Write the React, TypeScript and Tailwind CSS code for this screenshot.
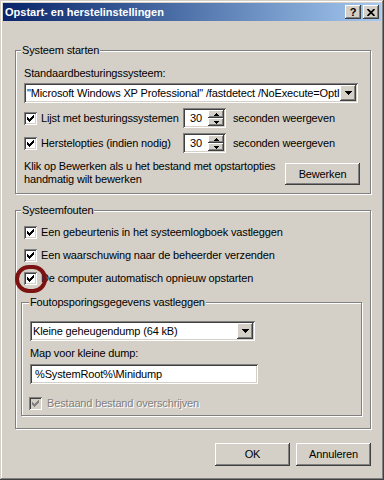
import { ReactNode } from "react";

const raised =
  "shadow-[inset_-1px_-1px_0_#404040,inset_1px_1px_0_#ffffff,inset_-2px_-2px_0_#808080,inset_2px_2px_0_#d4d0c8]";
const sunken =
  "shadow-[inset_1px_1px_0_#808080,inset_-1px_-1px_0_#ffffff,inset_2px_2px_0_#404040,inset_-2px_-2px_0_#d4d0c8]";

const Check = ({ disabled = false }: { disabled?: boolean }) => {
  const tops = [5, 6, 7, 6, 5, 4, 3];
  return (
    <div className={`relative w-[13px] h-[13px] shrink-0 ${sunken} ${disabled ? "bg-[#d4d0c8]" : "bg-white"}`}>
      <svg width="13" height="13" className="absolute left-0 top-0" shapeRendering="crispEdges">
        {tops.map((t, i) => (
          <rect key={i} x={3 + i} y={t} width="1" height="3" fill={disabled ? "#808080" : "#000000"} />
        ))}
      </svg>
    </div>
  );
};

const DownArrow = () => (
  <svg width="7" height="4" shapeRendering="crispEdges">
    <rect x="0" y="0" width="7" height="1" fill="#000" />
    <rect x="1" y="1" width="5" height="1" fill="#000" />
    <rect x="2" y="2" width="3" height="1" fill="#000" />
    <rect x="3" y="3" width="1" height="1" fill="#000" />
  </svg>
);

const Combo = ({ text, className }: { text: string; className: string }) => (
  <div className={`relative flex items-center bg-white ${sunken} ${className}`}>
    <span className="pl-[3px] pr-[20px] whitespace-nowrap overflow-hidden">{text}</span>
    <div className={`absolute right-[2px] top-[2px] w-[16px] h-[16px] bg-[#d4d0c8] flex items-center justify-center ${raised}`}>
      <DownArrow />
    </div>
  </div>
);

const Spinner = ({ value }: { value: string }) => (
  <div className={`relative w-[43px] h-[20px] bg-white flex items-center ${sunken}`}>
    <span className="pl-[7px]">{value}</span>
    <div className="absolute right-[2px] top-[2px] w-[16px] h-[16px] flex flex-col">
      <div className={`h-[8px] bg-[#d4d0c8] flex items-center justify-center ${raised}`}>
        <svg width="5" height="3" shapeRendering="crispEdges">
          <rect x="2" y="0" width="1" height="1" fill="#000" />
          <rect x="1" y="1" width="3" height="1" fill="#000" />
          <rect x="0" y="2" width="5" height="1" fill="#000" />
        </svg>
      </div>
      <div className={`h-[8px] bg-[#d4d0c8] flex items-center justify-center ${raised}`}>
        <svg width="5" height="3" shapeRendering="crispEdges">
          <rect x="0" y="0" width="5" height="1" fill="#000" />
          <rect x="1" y="1" width="3" height="1" fill="#000" />
          <rect x="2" y="2" width="1" height="1" fill="#000" />
        </svg>
      </div>
    </div>
  </div>
);

const Group = ({ title, left, className, children }: { title: string; left: string; className: string; children: ReactNode }) => (
  <div className={`relative border border-[#808080] shadow-[inset_1px_1px_0_#ffffff,1px_1px_0_#ffffff] ${className}`}>
    <span className={`absolute top-[-7px] px-[1px] bg-[#d4d0c8] leading-[13px] ${left}`}>{title}</span>
    {children}
  </div>
);

const Button = ({ label, className }: { label: string; className: string }) => (
  <div className={`flex items-center justify-center bg-[#d4d0c8] ${raised} ${className}`}>{label}</div>
);

export default function App() {
  return (
    <div className="relative w-[384px] h-[480px] bg-[#d4d0c8] p-[3px] font-['Liberation_Sans',Arial,sans-serif] text-[11px] leading-[13px] tracking-[-0.15px] text-black shadow-[inset_-1px_-1px_0_#404040,inset_1px_1px_0_#d4d0c8,inset_-2px_-2px_0_#808080,inset_2px_2px_0_#ffffff]">
      {/* title bar */}
      <div className="h-[18px] flex items-center justify-between pl-[2px] pr-[2px] bg-gradient-to-r from-[#0a246a] to-[#a6caf0]">
        <span className="text-white font-bold tracking-normal">Opstart- en herstelinstellingen</span>
        <div className="flex gap-[2px]">
          <div className={`w-[16px] h-[14px] bg-[#d4d0c8] flex items-center justify-center font-bold text-[11px] ${raised}`}>?</div>
          <div className={`w-[16px] h-[14px] bg-[#d4d0c8] flex items-center justify-center ${raised}`}>
            <svg width="8" height="7" viewBox="0 0 8 7">
              <path d="M0.5 0 L7.5 7 M7.5 0 L0.5 7" stroke="#000" strokeWidth="1.7" />
            </svg>
          </div>
        </div>
      </div>

      {/* Systeem starten */}
      <Group title="Systeem starten" left="left-[5px]" className="mt-[29px] ml-[12px] w-[356px] pl-[8px] pb-[7px]">
        <div className="mt-[16px] h-[13px]">Standaardbesturingssysteem:</div>
        <Combo
          text={'"Microsoft Windows XP Professional" /fastdetect /NoExecute=OptIn'}
          className="mt-[3px] h-[20px] w-[334px]"
        />
        <div className="mt-[5px] h-[20px] flex items-center">
          <Check />
          <span className="ml-[4px] w-[142px]">Lijst met besturingssystemen</span>
          <Spinner value="30" />
          <span className="ml-[7px]">seconden weergeven</span>
        </div>
        <div className="mt-[5px] h-[20px] flex items-center">
          <Check />
          <span className="ml-[4px] w-[142px]">Herstelopties (indien nodig)</span>
          <Spinner value="30" />
          <span className="ml-[7px]">seconden weergeven</span>
        </div>
        <div className="mt-[7px] flex items-start">
          <p className="w-[261px]">
            Klik op Bewerken als u het bestand met opstartopties
            <br />
            handmatig wilt bewerken
          </p>
          <Button label="Bewerken" className="mt-[3px] w-[75px] h-[22px]" />
        </div>
      </Group>

      {/* Systeemfouten */}
      <Group title="Systeemfouten" left="left-[5px]" className="mt-[16px] ml-[12px] w-[356px] pl-[5px] pb-[12px]">
        <div className="ml-[3px] mt-[15px] h-[13px] flex items-center">
          <Check />
          <span className="ml-[4px]">Een gebeurtenis in het systeemlogboek vastleggen</span>
        </div>
        <div className="ml-[3px] mt-[10px] h-[13px] flex items-center">
          <Check />
          <span className="ml-[4px]">Een waarschuwing naar de beheerder verzenden</span>
        </div>
        <div className="ml-[3px] mt-[10px] h-[13px] flex items-center">
          <Check />
          <span className="ml-[4px]">De computer automatisch opnieuw opstarten</span>
        </div>

        <Group title="Foutopsporingsgegevens vastleggen" left="left-[7px]" className="mt-[17px] w-[341px] pl-[8px] pb-[5px]">
          <Combo text="Kleine geheugendump (64 kB)" className="mt-[18px] h-[20px] w-[225px]" />
          <div className="mt-[6px] h-[13px]">Map voor kleine dump:</div>
          <div className={`mt-[4px] h-[20px] w-[228px] bg-white flex items-center pl-[5px] ${sunken}`}>
            %SystemRoot%\Minidump
          </div>
          <div className="ml-[-1px] mt-[13px] h-[13px] flex items-center">
            <Check disabled />
            <span className="ml-[5px] text-[#808080] [text-shadow:1px_1px_0_#ffffff]">Bestaand bestand overschrijven</span>
          </div>
        </Group>
      </Group>

      {/* buttons */}
      <div className="mt-[14px] flex justify-end gap-[6px] pr-[10px]">
        <Button label="OK" className="w-[75px] h-[23px]" />
        <Button label="Annuleren" className="w-[75px] h-[23px]" />
      </div>

      {/* annotation circle */}
      <div className="absolute left-[15px] top-[265px] w-[32px] h-[28px] rounded-full border-[4px] border-[#7c1212]" />
    </div>
  );
}
